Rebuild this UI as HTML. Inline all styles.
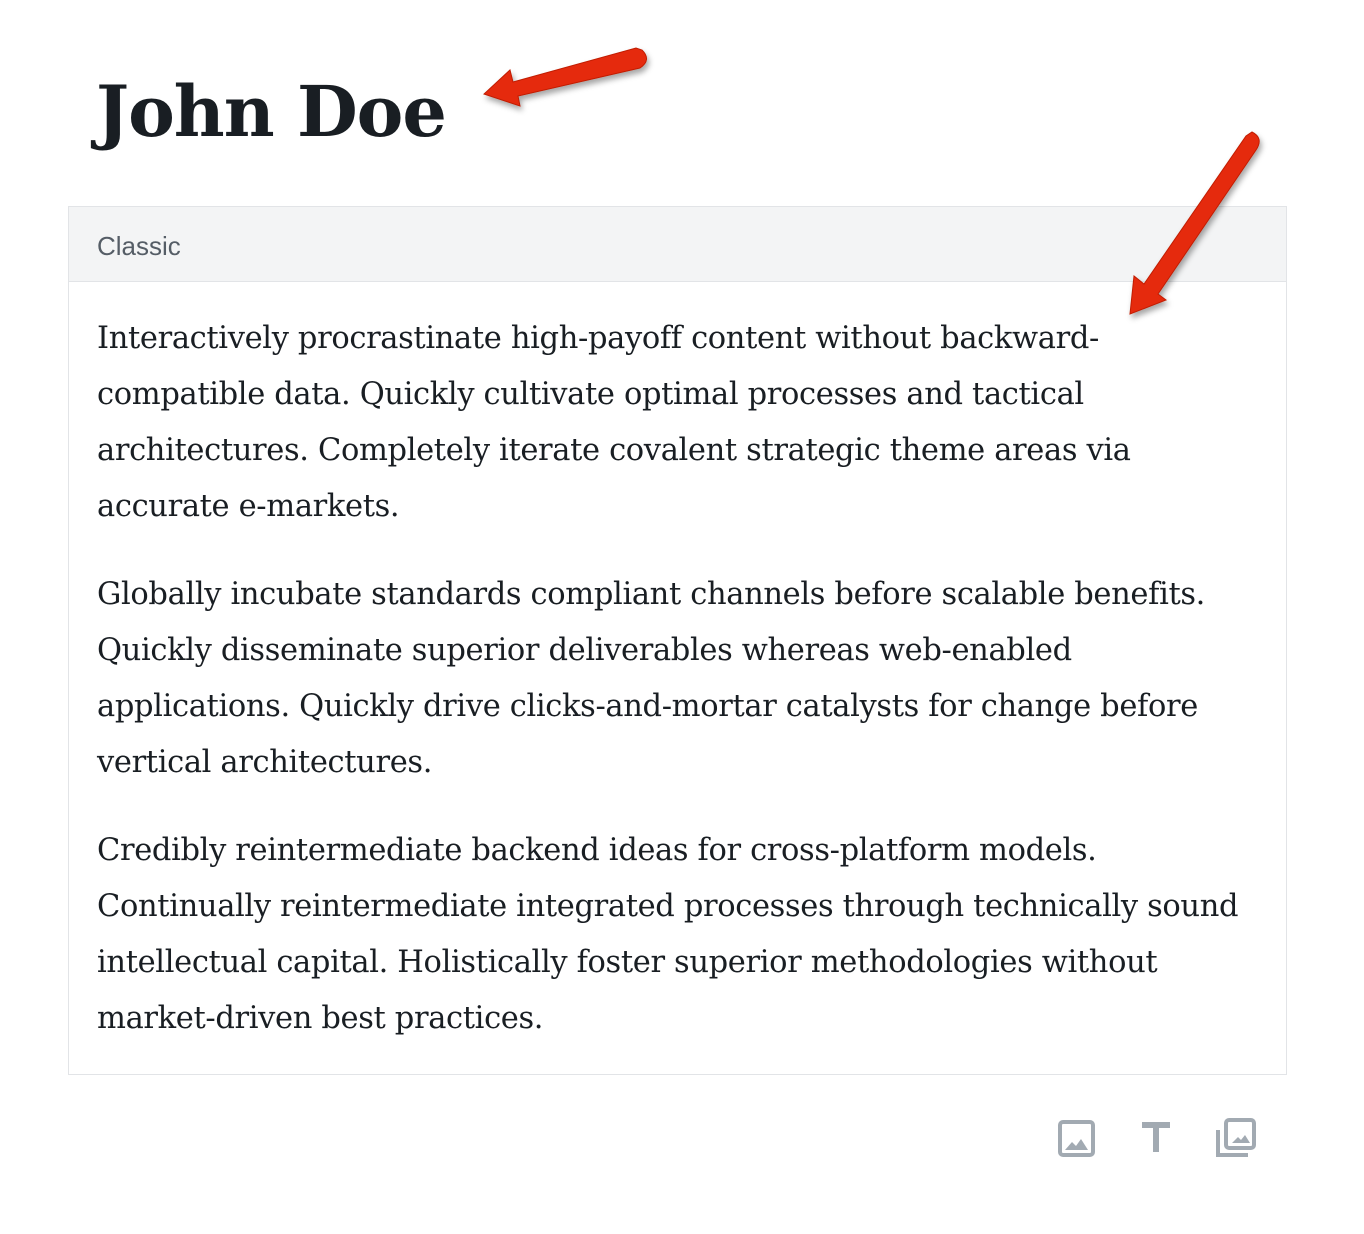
<!DOCTYPE html>
<html><head><meta charset="utf-8"><style>
body{margin:0;background:#fff;width:1364px;height:1234px;position:relative;overflow:hidden}
h1{position:absolute;left:96px;top:62px;margin:0;font:bold 70px/100px "DejaVu Serif",serif;color:#191e23;letter-spacing:-1px}
.box{position:absolute;left:68px;top:206px;width:1217px;height:867px;border:1px solid #e2e4e7}
.hd{height:74px;background:#f3f4f5;border-bottom:1px solid #e2e4e7;font:26px/78px "Liberation Sans",sans-serif;color:#555d66;padding-left:28px}
.ct{padding:29px 0 0 28px;font:30.5px/56px "DejaVu Serif",serif;color:#191e23;white-space:nowrap;letter-spacing:-0.35px}
.ct p{margin:0 0 32px}
svg{position:absolute;left:0;top:0}
</style></head><body>
<h1>John Doe</h1>
<div class="box"><div class="hd">Classic</div>
<div class="ct">
<p>Interactively procrastinate high-payoff content without backward-<br>compatible data. Quickly cultivate optimal processes and tactical<br>architectures. Completely iterate covalent strategic theme areas via<br>accurate e-markets.</p>
<p>Globally incubate standards compliant channels before scalable benefits.<br>Quickly disseminate superior deliverables whereas web-enabled<br>applications. Quickly drive clicks-and-mortar catalysts for change before<br>vertical architectures.</p>
<p>Credibly reintermediate backend ideas for cross-platform models.<br>Continually reintermediate integrated processes through technically sound<br>intellectual capital. Holistically foster superior methodologies without<br>market-driven best practices.</p>
</div></div>
<svg width="1364" height="1234">
<defs><filter id="s"><feDropShadow dx="2" dy="4" stdDeviation="3" flood-opacity="0.35"/></filter></defs>
<g filter="url(#s)" fill="#e52a0c" stroke="#c11e05" stroke-width="1">
<path d="M642 50 Q652 60 640 68 L518 96 L520 106 L484 94 L510 70 L513 82 L636 48 Z"/>
<path d="M1252 132 Q1264 138 1256 150 L1158 294 L1166 300 L1130 314 L1134 276 L1144 284 L1246 136 Z"/>
</g>
<g fill="none" stroke="#a2aab2" stroke-width="4">
<rect x="1060" y="1122" width="33" height="33" rx="3"/>
<rect x="1226" y="1120" width="28" height="28" rx="3"/>
<path d="M1218 1130 V1155 H1248"/>
</g>
<g fill="#a2aab2">
<path d="M1065 1150 L1072 1142 L1076 1146 L1081 1139 L1088 1150 Z"/>
<path d="M1232 1143 L1238 1137 L1241 1140 L1245 1135 L1250 1143 Z"/>
<rect x="1142" y="1122" width="28" height="6"/>
<rect x="1153" y="1122" width="6" height="30"/>
</g>
</svg>
</body></html>
